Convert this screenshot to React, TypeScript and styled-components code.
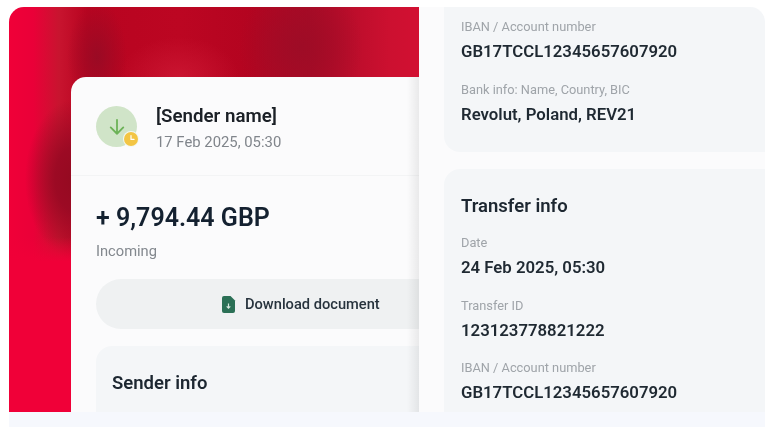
import React from "react";
import styled, { createGlobalStyle } from "styled-components";

const GlobalStyle = createGlobalStyle`
  html, body {
    margin: 0;
    padding: 0;
    background: #fff;
    font-family: Roboto, "Liberation Sans", sans-serif;
  }
`;

const Page = styled.div`
  width: 777px;
  height: 427px;
  box-sizing: border-box;
  padding: 7px 12px 0 9px;
  overflow: hidden;
`;

const Frame = styled.div`
  height: 420px;
  background: #f6f8fd;
  border-radius: 15px 15px 0 0;
  overflow: hidden;
`;

const Hero = styled.div`
  height: 405px;
  display: flex;
  overflow: hidden;
  filter: blur(0.35px);
  background:
    radial-gradient(ellipse 50px 80px at 66px 172px, #940a20 0%, #9c0a24 40%, rgba(170, 10, 40, 0) 100%),
    radial-gradient(ellipse 30px 56px at 88px 50px, #9a0a24 0%, rgba(154, 10, 36, 0) 100%),
    radial-gradient(ellipse 62px 70px at 292px 40px, #9e0c26 0%, rgba(158, 12, 38, 0) 100%),
    radial-gradient(ellipse 60px 40px at 170px 70px, rgba(205, 24, 52, 0.8) 0%, rgba(205, 24, 52, 0) 100%),
    linear-gradient(90deg, #f00038 0px, #ea0038 24px, #c8142f 50px, #b80420 78px, #bc0622 170px, #b40420 240px, #aa0a26 300px, #cc1030 380px, #d21032 410px);
`;

const BrightFoot = styled.div`
  width: 62px;
  flex-shrink: 0;
  display: flex;
  align-items: flex-end;
`;

const FootFill = styled.div`
  width: 100%;
  height: 175px;
  background: linear-gradient(180deg, rgba(240, 0, 56, 0) 0%, #f00038 14%, #f00038 100%);
`;

const LeftCard = styled.section`
  width: 348px;
  flex-shrink: 0;
  margin-top: 70px;
  background: #fbfbfc;
  border-radius: 15px 0 0 0;
  box-sizing: border-box;
  overflow: hidden;
`;

const SenderHeader = styled.header`
  height: 99px;
  box-sizing: border-box;
  padding: 29px 0 0 25px;
  display: flex;
  gap: 19px;
  border-bottom: 1px solid #f3f4f5;
`;

const Avatar = styled.div`
  position: relative;
  width: 41px;
  height: 41px;
  border-radius: 50%;
  background: #d0e4c8;
  display: flex;
  align-items: center;
  justify-content: center;
  flex-shrink: 0;
`;

const ClockBadge = styled.svg`
  position: absolute;
  right: -2px;
  bottom: 0;
`;

const SenderText = styled.div`
  display: flex;
  flex-direction: column;
  margin-top: -2px;
`;

const SenderName = styled.div`
  font-size: 18.7px;
  line-height: 24px;
  font-weight: 600;
  color: #1b2026;
`;

const SenderDate = styled.div`
  font-size: 14.85px;
  line-height: 20px;
  margin-top: 4px;
  color: #80858b;
`;

const AmountBlock = styled.div`
  padding: 26px 0 0 25px;
`;

const Amount = styled.div`
  font-size: 25px;
  line-height: 32px;
  font-weight: 600;
  color: #142130;
`;

const AmountKind = styled.div`
  font-size: 14.7px;
  line-height: 20px;
  margin-top: 7px;
  color: #83888e;
`;

const DownloadButton = styled.button`
  display: flex;
  align-items: center;
  gap: 9px;
  width: 323px;
  height: 50px;
  margin: 18px 0 0 25px;
  padding: 0 0 0 126px;
  border: 0;
  border-radius: 25px 0 0 25px;
  background: #eff1f2;
  font-family: inherit;
  font-size: 14.65px;
  font-weight: 500;
  color: #27333d;
`;

const SenderInfoCard = styled.div`
  width: 323px;
  height: 80px;
  box-sizing: border-box;
  margin: 17px 0 0 25px;
  padding: 25px 0 0 16px;
  background: #f4f6f8;
  border-radius: 16px 0 0 0;
`;

const CardTitle = styled.h2`
  margin: 0;
  font-size: 18.5px;
  line-height: 24px;
  font-weight: 600;
  color: #1d2731;
`;

const RightPanel = styled.section`
  position: relative;
  flex: 1;
  background: #fbfbfc;
  padding-left: 25px;
  display: flex;
  flex-direction: column;
  gap: 17px;

  &::before {
    content: "";
    position: absolute;
    left: -12px;
    top: 70px;
    bottom: 0;
    width: 12px;
    background: linear-gradient(90deg, rgba(0, 0, 0, 0), rgba(0, 0, 0, 0.07));
  }
`;

const InfoCard = styled.div<{ $top?: boolean }>`
  background: #f4f6f8;
  box-sizing: border-box;
  padding: ${({ $top }) => ($top ? "12px 0 0 17px" : "25px 0 0 17px")};
  height: ${({ $top }) => ($top ? "145px" : "auto")};
  flex: ${({ $top }) => ($top ? "none" : "1")};
  border-radius: ${({ $top }) => ($top ? "0 15px 0 16px" : "16px 0 0 0")};
`;

const Field = styled.div`
  margin-top: 18.5px;
  &:first-child {
    margin-top: 0;
  }
`;

const TitledFields = styled.div`
  margin-top: 17px;
`;

const FieldLabel = styled.div`
  font-size: 12.8px;
  line-height: 16px;
  color: #9fa4a9;
`;

const FieldValue = styled.div`
  font-size: 16.75px;
  line-height: 23px;
  margin-top: 5px;
  font-weight: 600;
  color: #1f2932;
`;

const InfoField = ({ label, value }: { label: string; value: string }) => (
  <Field>
    <FieldLabel>{label}</FieldLabel>
    <FieldValue>{value}</FieldValue>
  </Field>
);

export default function App() {
  return (
    <>
      <GlobalStyle />
      <Page>
        <Frame>
          <Hero>
            <BrightFoot>
              <FootFill />
            </BrightFoot>
            <LeftCard>
              <SenderHeader>
                <Avatar>
                  <svg width="18" height="18" viewBox="0 0 20 20" fill="none" stroke="#6cb257" strokeWidth="2" strokeLinecap="round" strokeLinejoin="round">
                    <path d="M10 2V17.5M3 10.5 10 17.5l7-7" />
                  </svg>
                  <ClockBadge width="16" height="16" viewBox="0 0 16 16">
                    <circle cx="8" cy="8" r="8" fill="#f4f8f1" />
                    <circle cx="8" cy="8" r="7" fill="#f3c544" />
                    <path d="M8 4.5V8.4H11" fill="none" stroke="#fff" strokeWidth="1.2" strokeLinecap="round" />
                  </ClockBadge>
                </Avatar>
                <SenderText>
                  <SenderName>[Sender name]</SenderName>
                  <SenderDate>17 Feb 2025, 05:30</SenderDate>
                </SenderText>
              </SenderHeader>
              <AmountBlock>
                <Amount>+ 9,794.44 GBP</Amount>
                <AmountKind>Incoming</AmountKind>
              </AmountBlock>
              <DownloadButton>
                <svg width="14" height="17" viewBox="0 0 14 17">
                  <path d="M2 0H8.5L13 4.5V15a2 2 0 0 1-2 2H2a2 2 0 0 1-2-2V2a2 2 0 0 1 2-2Z" fill="#2b7056" />
                  <path d="M6.5 7.5V12M4.7 10.4 6.5 12.2l1.8-1.8" fill="none" stroke="#d7e7df" strokeWidth="1.2" />
                </svg>
                Download document
              </DownloadButton>
              <SenderInfoCard>
                <CardTitle>Sender info</CardTitle>
              </SenderInfoCard>
            </LeftCard>
            <RightPanel>
              <InfoCard $top>
                <InfoField label="IBAN / Account number" value="GB17TCCL12345657607920" />
                <InfoField label="Bank info: Name, Country, BIC" value="Revolut, Poland, REV21" />
              </InfoCard>
              <InfoCard>
                <CardTitle>Transfer info</CardTitle>
                <TitledFields>
                  <InfoField label="Date" value="24 Feb 2025, 05:30" />
                  <InfoField label="Transfer ID" value="123123778821222" />
                  <InfoField label="IBAN / Account number" value="GB17TCCL12345657607920" />
                </TitledFields>
              </InfoCard>
            </RightPanel>
          </Hero>
        </Frame>
      </Page>
    </>
  );
}
